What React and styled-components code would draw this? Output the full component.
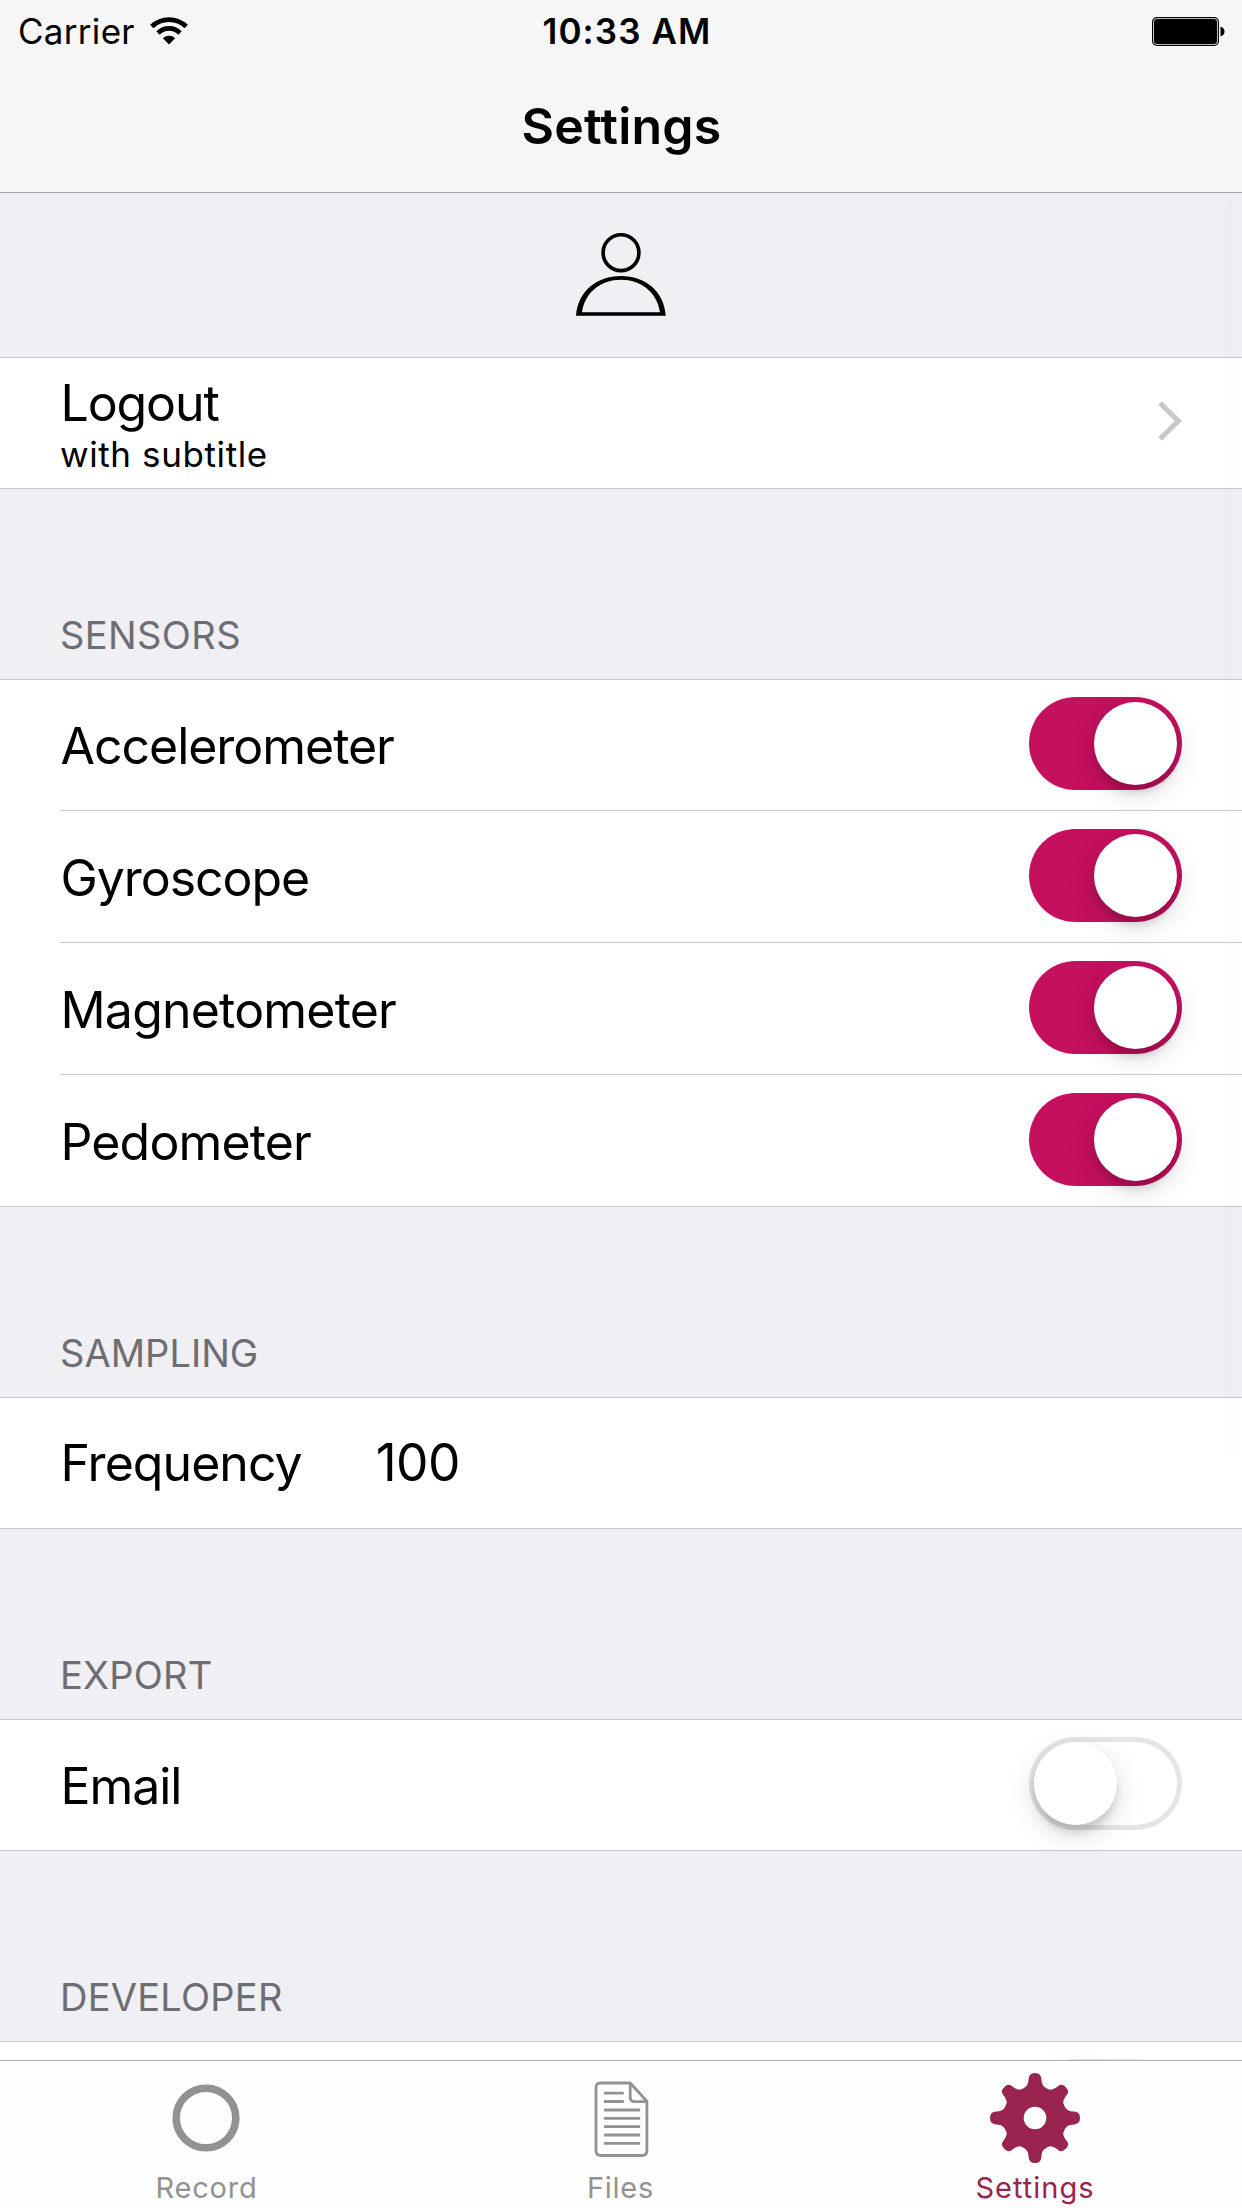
import React from "react";
import styled, { createGlobalStyle } from "styled-components";

const GlobalStyle = createGlobalStyle`
  * { box-sizing: border-box; }
  body {
    margin: 0;
    background: #efeff4;
    font-family: Inter, "Liberation Sans", sans-serif;
    color: #000;
    -webkit-font-smoothing: antialiased;
  }
  svg { display: block; }
`;

const Screen = styled.div`
  width: 1242px;
  height: 2208px;
  display: flex;
  flex-direction: column;
  overflow: hidden;
  background: #efeff4;
`;

const NavBar = styled.header`
  flex: none;
  height: 193px;
  display: flex;
  flex-direction: column;
  background: #f6f6f7;
  border-bottom: 1px solid #a7a7aa;
`;

const StatusBar = styled.div`
  height: 60px;
  display: grid;
  grid-template-columns: 1fr auto 1fr;
  align-items: center;
  padding: 2px 17px 0 18px;
`;

const Carrier = styled.div`
  display: flex;
  align-items: center;
  gap: 15px;
  font-size: 35px;
  line-height: 40px;
  letter-spacing: ${(p) => p.$spacing}px;
`;

const Clock = styled.div`
  font-size: 35px;
  line-height: 40px;
  font-weight: 560;
  letter-spacing: ${(p) => p.$spacing}px;
  padding-left: 11px;
`;

const BatterySlot = styled.div`
  justify-self: end;
`;

const Title = styled.h1`
  margin: 0;
  padding: 36px 0 0 1px;
  text-align: center;
  font-size: 50px;
  line-height: 60px;
  font-weight: 600;
  letter-spacing: ${(p) => p.$spacing}px;
`;

const Content = styled.main`
  position: relative;
  flex: 1;
  min-height: 0;
  overflow: hidden;
  display: flex;
  flex-direction: column;
`;

const ScrollIndicator = styled.div`
  position: absolute;
  top: 9px;
  right: 9px;
  width: 7px;
  height: 1252px;
  border-radius: 4px;
  background: rgba(0, 0, 0, 0.01);
`;

const Avatar = styled.div`
  flex: none;
  height: 164px;
  display: flex;
  justify-content: center;
  padding-top: 40px;
`;

const SectionHeader = styled.h2`
  flex: none;
  margin: 0;
  height: 190px;
  display: flex;
  align-items: flex-end;
  padding: 0 0 22px 60px;
  font-size: 38px;
  line-height: 44px;
  font-weight: 400;
  color: #6d6d72;
  letter-spacing: ${(p) => p.$spacing}px;
`;

const Group = styled.section`
  flex: none;
  background: #fff;
  box-shadow: inset 0 1px #c8c7cc, inset 0 -1px #c8c7cc;
`;

const Row = styled.div`
  height: 132px;
  margin-left: 60px;
  padding-right: 60px;
  display: flex;
  align-items: center;
  border-bottom: 1px solid ${(p) => (p.$last ? "transparent" : "#c8c7cc")};
`;

const Label = styled.span`
  font-size: 50px;
  line-height: 60px;
  padding: ${(p) => (p.$raised ? "1px" : "3px")} 0 0 0.5px;
  white-space: nowrap;
  letter-spacing: ${(p) => p.$spacing}px;
`;

const Stack = styled.div`
  display: flex;
  flex-direction: column;
`;

const Subtitle = styled.span`
  font-size: 35px;
  line-height: 42px;
  letter-spacing: ${(p) => p.$spacing}px;
`;

const Value = styled.span`
  margin-left: 74px;
  padding-bottom: 2px;
  font-size: 51.5px;
  line-height: 60px;
  letter-spacing: ${(p) => p.$spacing}px;
`;

const Spacer = styled.div`
  flex: 1;
`;

const Disclosure = styled.div`
  padding-bottom: 3px;
`;

const Track = styled.div`
  flex: none;
  width: 153px;
  height: 93px;
  margin-bottom: 2px;
  padding: 5px;
  display: flex;
  justify-content: ${(p) => (p.$on ? "flex-end" : "flex-start")};
  border-radius: 47px;
  background: ${(p) => (p.$on ? "#c5105f" : "#fff")};
  box-shadow: ${(p) => (p.$on ? "none" : "inset 0 0 0 5px #e5e5e5")};
`;

const Thumb = styled.div`
  width: 83px;
  height: 83px;
  border-radius: 50%;
  background: #fff;
  box-shadow: 0 9px 28px rgba(0, 0, 0, 0.14), 0 8px 8px -1px rgba(0, 0, 0, 0.14);
`;

const TabBar = styled.nav`
  flex: none;
  height: 148px;
  display: grid;
  grid-template-columns: repeat(3, 414px);
  background: #fefefe;
  border-top: 1px solid #adadb0;
`;

const Tab = styled.div`
  display: flex;
  flex-direction: column;
  align-items: center;
  padding-top: 10px;
  color: ${(p) => (p.$active ? "#99244f" : "#929292")};
`;

const TabLabel = styled.span`
  margin-top: 5px;
  padding-right: ${(p) => (p.$flush ? 0 : 1)}px;
  font-size: 29px;
  line-height: 36px;
  letter-spacing: ${(p) => p.$spacing}px;
`;

function Toggle({ on }) {
  return (
    <Track $on={on} role="switch" aria-checked={on}>
      <Thumb />
    </Track>
  );
}

const WifiIcon = () => (
  <svg width="38" height="28" viewBox="0 0 38 28" fill="none" stroke="#000" strokeWidth="4.8">
    <path d="M1.8 9.6C11.5 0.3 26.5 0.3 36.2 9.6" />
    <path d="M8 16C14.2 9.9 23.8 9.9 30 16" />
    <path d="M19 27.5L12.9 21.3C16.4 18 21.6 18 25.1 21.3Z" fill="#000" stroke="none" />
  </svg>
);

const BatteryIcon = () => (
  <svg width="73" height="29" viewBox="0 0 73 29">
    <rect x="0.6" y="0.6" width="65.8" height="27.8" rx="4.4" fill="none" stroke="#000" strokeWidth="1.2" />
    <rect x="2" y="2" width="63" height="25" rx="3.2" />
    <path d="M68.5 9.5C71.5 10.5 72.5 12.5 72.5 14.5S71.5 18.5 68.5 19.5Z" />
  </svg>
);

const PersonIcon = () => (
  <svg width="90" height="84" viewBox="0 0 90 84">
    <circle cx="45" cy="19.7" r="17.9" fill="none" stroke="#000" strokeWidth="3.6" />
    <path
      fillRule="evenodd"
      d="M0 82.7C2 58 21 43 45 43S88 58 89.8 82.7ZM6 79.3H84C81 59 65 46.7 45 46.7S9 59 6 79.3Z"
    />
  </svg>
);

const ChevronIcon = () => (
  <svg width="25" height="40" viewBox="0 0 25 40" fill="none" stroke="#c7c7cc" strokeWidth="5.2">
    <path d="M3 2L21.3 20L3 38" />
  </svg>
);

const RecordIcon = () => (
  <svg width="92" height="94" viewBox="0 0 92 94">
    <circle cx="45" cy="47" r="29.8" fill="none" stroke="currentColor" strokeWidth="7.6" />
  </svg>
);

const FilesIcon = () => (
  <svg width="92" height="94" viewBox="-0.7 0 92 94" fill="none" stroke="currentColor" strokeWidth="2.8">
    <path d="M54.5 12H25Q20.3 12 20.3 16.7V79.8Q20.3 84.5 25 84.5H66.5Q71.2 84.5 71.2 79.8V30.2Z" />
    <path d="M54.5 12V26Q54.5 30.6 59 30.6H71.2" />
    <path d="M28.3 22.2H48M28.3 30.5H48M28.3 39H64.5M28.3 47.3H64.5M28.3 55.6H64.5M28.3 64H64.5M28.3 72.3H64.5" />
  </svg>
);

const TOOTH_ANGLES = [0, 45, 90, 135, 180, 225, 270, 315];

const GearIcon = () => (
  <svg width="92" height="94" viewBox="-46 -47 92 94" fill="currentColor">
    <path
      fillRule="evenodd"
      d="M0 -31.5A31.5 31.5 0 1 1 0 31.5A31.5 31.5 0 1 1 0 -31.5ZM0 -11.3A11.3 11.3 0 1 0 0 11.3A11.3 11.3 0 1 0 0 -11.3Z"
    />
    {TOOTH_ANGLES.map((a) => (
      <path
        key={a}
        transform={`rotate(${a})`}
        d={
          a % 90
            ? "M-12.5 -28C-8 -31 -6.8 -33.5 -6.2 -39Q-5.6 -43.6 0 -43.6Q5.6 -43.6 6.2 -39C6.8 -33.5 8 -31 12.5 -28Z"
            : "M-15 -28C-8 -31 -6.8 -33 -6.4 -39Q-6 -45 0 -45Q6 -45 6.4 -39C6.8 -33 8 -31 15 -28Z"
        }
      />
    ))}
  </svg>
);

const SENSORS = [
  { name: "Accelerometer", spacing: -1.03 },
  { name: "Gyroscope", spacing: -1.05 },
  { name: "Magnetometer", spacing: -0.8 },
  { name: "Pedometer", spacing: -0.85 },
];

export default function App() {
  return (
    <>
      <GlobalStyle />
      <Screen>
        <NavBar>
          <StatusBar>
            <Carrier $spacing={0.3}>
              Carrier
              <WifiIcon />
            </Carrier>
            <Clock $spacing={1.1}>10:33 AM</Clock>
            <BatterySlot>
              <BatteryIcon />
            </BatterySlot>
          </StatusBar>
          <Title $spacing={0.2}>Settings</Title>
        </NavBar>
        <Content>
          <Avatar>
            <PersonIcon />
          </Avatar>
          <Group>
            <Row $last>
              <Stack>
                <Label $spacing={-1.1}>Logout</Label>
                <Subtitle $spacing={0.6}>with subtitle</Subtitle>
              </Stack>
              <Spacer />
              <Disclosure>
                <ChevronIcon />
              </Disclosure>
            </Row>
          </Group>
          <SectionHeader $spacing={0.4}>SENSORS</SectionHeader>
          <Group>
            {SENSORS.map((s, i) => (
              <Row key={s.name} $last={i === SENSORS.length - 1}>
                <Label $spacing={s.spacing}>{s.name}</Label>
                <Spacer />
                <Toggle on />
              </Row>
            ))}
          </Group>
          <SectionHeader $spacing={0.05}>SAMPLING</SectionHeader>
          <Group>
            <Row $last>
              <Label $raised $spacing={-0.95}>Frequency</Label>
              <Value $spacing={-0.6}>100</Value>
            </Row>
          </Group>
          <SectionHeader $spacing={0.25}>EXPORT</SectionHeader>
          <Group>
            <Row $last>
              <Label $spacing={-1.05}>Email</Label>
              <Spacer />
              <Toggle on={false} />
            </Row>
          </Group>
          <SectionHeader $spacing={0.25}>DEVELOPER</SectionHeader>
          <Group>
            <Row $last>
              <Spacer />
              <Toggle on={false} />
            </Row>
          </Group>
          <ScrollIndicator />
        </Content>
        <TabBar>
          <Tab>
            <RecordIcon />
            <TabLabel $spacing={0.8}>Record</TabLabel>
          </Tab>
          <Tab>
            <FilesIcon />
            <TabLabel $spacing={0.75}>Files</TabLabel>
          </Tab>
          <Tab $active>
            <GearIcon />
            <TabLabel $flush $spacing={1}>Settings</TabLabel>
          </Tab>
        </TabBar>
      </Screen>
    </>
  );
}
